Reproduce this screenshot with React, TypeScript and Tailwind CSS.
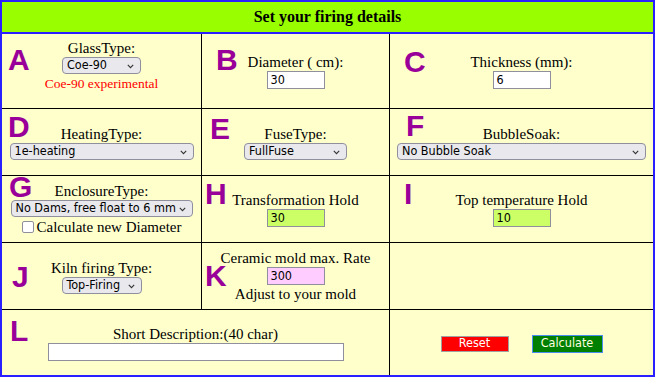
import type { ReactNode } from "react"

const serif = "font-['Liberation_Serif',serif]"
const ui = "font-['DejaVu_Sans_Condensed','Noto_Sans',sans-serif] text-[12.5px]"

function Letter({ ch, className }: { ch: string; className: string }) {
  return (
    <span
      className={`absolute font-['Liberation_Sans',Arial,sans-serif] font-bold text-[30px] leading-[30px] text-[#990099] ${className}`}
    >
      {ch}
    </span>
  )
}

function Cell({ children, className = "" }: { children?: ReactNode; className?: string }) {
  return (
    <div
      className={`relative overflow-hidden bg-[#ffffcc] flex flex-col items-center justify-center text-center ${className}`}
    >
      {children}
    </div>
  )
}

function Select({ value, className }: { value: string; className: string }) {
  return (
    <span
      className={`relative flex items-center h-[17px] rounded-[4px] border border-[#8f8f9d] bg-[#e9e9ed] pl-[4px] text-left text-black ${ui} ${className}`}
    >
      <span className="leading-none">{value}</span>
      <svg
        className="absolute right-[6px] top-[6px]"
        width="7"
        height="5"
        viewBox="0 0 7 5"
        fill="none"
      >
        <path d="M0.8 0.8 L3.5 3.6 L6.2 0.8" stroke="#333" strokeWidth="1.1" />
      </svg>
    </span>
  )
}

function Field({ value, className }: { value: string; className: string }) {
  return (
    <span
      className={`flex items-center h-[18px] border border-[#8f8f9d] pl-[3px] text-left text-black ${ui} ${className}`}
    >
      <span className="leading-none">{value}</span>
    </span>
  )
}

export default function App() {
  return (
    <div className={`w-[655px] h-[377px] border-2 border-[#2a1fff] bg-[#ffffcc] text-black ${serif} text-[15px] leading-[18px]`}>
      <div className="h-[32px] bg-[#99ff00] border-b-2 border-[#2a1fff] flex items-center justify-center font-bold text-[16px]">
        Set your firing details
      </div>

      <div className="grid grid-cols-[199px_187px_263px] grid-rows-[74px_66px_66px_66px_65px] gap-px bg-black">
        {/* row 1 */}
        <Cell className="pb-[11px]">
          <Letter ch="A" className="left-[6px] top-[11px]" />
          <div>GlassType:</div>
          <Select value="Coe-90" className="w-[79px]" />
          <div className="text-[#ff0000] text-[13.5px] leading-[18px] mt-[1px]">Coe-90 experimental</div>
        </Cell>
        <Cell>
          <Letter ch="B" className="left-[14px] top-[11px]" />
          <div>Diameter ( cm):</div>
          <Field value="30" className="w-[58px] bg-white" />
        </Cell>
        <Cell>
          <Letter ch="C" className="left-[14px] top-[13px]" />
          <div>Thickness (mm):</div>
          <Field value="6" className="w-[58px] bg-white" />
        </Cell>

        {/* row 2 */}
        <Cell>
          <Letter ch="D" className="left-[6px] top-[3px]" />
          <div>HeatingType:</div>
          <Select value="1e-heating" className="w-[184px]" />
        </Cell>
        <Cell>
          <Letter ch="E" className="left-[8px] top-[5px]" />
          <div>FuseType:</div>
          <Select value="FullFuse" className="w-[103px]" />
        </Cell>
        <Cell>
          <Letter ch="F" className="left-[16px] top-[2px]" />
          <div>BubbleSoak:</div>
          <Select value="No Bubble Soak" className="w-[249px]" />
        </Cell>

        {/* row 3 */}
        <Cell>
          <Letter ch="G" className="left-[7px] top-[-4px]" />
          <div>EnclosureType:</div>
          <Select value="No Dams, free float to 6 mm" className="w-[182px]" />
          <label className="flex items-center gap-[3px] mt-[1px]">
            <span className="w-[12px] h-[12px] rounded-[2px] border border-[#8f8f9d] bg-white" />
            <span>Calculate new Diameter</span>
          </label>
        </Cell>
        <Cell>
          <Letter ch="H" className="left-[3px] top-[3px]" />
          <div>Transformation Hold</div>
          <Field value="30" className="w-[58px] bg-[#ccff66]" />
        </Cell>
        <Cell>
          <Letter ch="I" className="left-[14px] top-[3px]" />
          <div>Top temperature Hold</div>
          <Field value="10" className="w-[58px] bg-[#ccff66]" />
        </Cell>

        {/* row 4 */}
        <Cell>
          <Letter ch="J" className="left-[10px] top-[19px]" />
          <div>Kiln firing Type:</div>
          <Select value="Top-Firing" className="w-[80px]" />
        </Cell>
        <Cell>
          <Letter ch="K" className="left-[3px] top-[18px]" />
          <div>Ceramic mold max. Rate</div>
          <Field value="300" className="w-[58px] bg-[#ffccff]" />
          <div>Adjust to your mold</div>
        </Cell>
        <Cell />

        {/* row 5 */}
        <Cell className="col-span-2">
          <Letter ch="L" className="left-[8px] top-[6px]" />
          <div>Short Description:(40 char)</div>
          <Field value="" className="w-[296px] bg-white" />
        </Cell>
        <Cell className="flex-row gap-[23px]">
          <button className={`w-[68px] h-[16px] mt-[2px] bg-[#ff0000] border border-[#a0a0a0] text-white leading-none ${ui}`}>
            Reset
          </button>
          <button className={`w-[71px] h-[18px] mt-[2px] bg-[#008000] border border-[#4a8cf0] text-[#ffffe0] leading-none ${ui}`}>
            Calculate
          </button>
        </Cell>
      </div>
    </div>
  )
}
